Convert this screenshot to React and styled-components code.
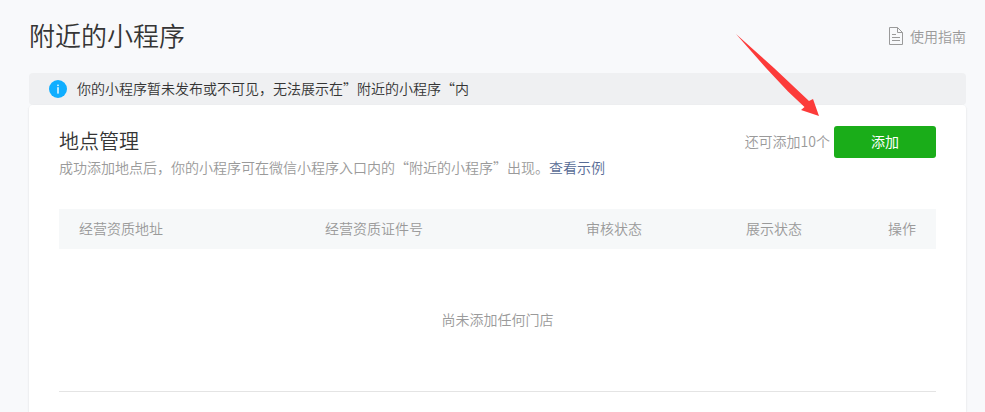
import React from 'react';
import styled, { createGlobalStyle } from 'styled-components';

const GlobalStyle = createGlobalStyle`
  * {
    box-sizing: border-box;
  }
  body {
    margin: 0;
    background: #f8f9fb;
    color: #353535;
    font-family: "Noto Sans CJK SC", "Liberation Sans", sans-serif;
    font-size: 14px;
    font-weight: 350;
    line-height: 20px;
  }
`;

const Page = styled.main`
  display: flex;
  flex-direction: column;
  min-height: 100vh;
  padding: 16px 19px 0 29px;
`;

const Header = styled.header`
  display: flex;
  align-items: center;
  justify-content: space-between;
  height: 40px;
  margin-bottom: 17px;
`;

const Title = styled.h1`
  margin: 0;
  font-size: 26px;
  font-weight: 350;
  line-height: 38px;
  padding-bottom: 2px;
`;

const Label = styled.span`
  padding-bottom: 2px;
`;

const GuideLink = styled.a`
  display: flex;
  align-items: center;
  gap: 7px;
  color: #9a9a9a;
  text-decoration: none;
`;

const Notice = styled.div`
  display: flex;
  align-items: center;
  gap: 10px;
  height: 32px;
  padding: 0 20px;
  border-radius: 4px;
  background: #eff0f2;
`;

const Card = styled.section`
  flex: 1;
  padding: 21px 30px 20px;
  border-radius: 4px 4px 0 0;
  background: #fff;
  box-shadow: 0 1px 2px rgba(150, 150, 150, 0.3);
`;

const CardHeader = styled.div`
  display: flex;
  align-items: flex-start;
  justify-content: space-between;
  margin-bottom: 31px;
`;

const SubTitle = styled.h2`
  margin: 0;
  font-size: 20px;
  font-weight: 350;
  line-height: 30px;
`;

const Desc = styled.p`
  margin: 0;
  color: #9a9a9a;
  line-height: 22px;
`;

const Link = styled.a`
  color: #576b95;
  text-decoration: none;
`;

const Actions = styled.div`
  position: relative;
  display: flex;
  align-items: center;
  gap: 4px;
  color: #9a9a9a;
`;

const Button = styled.button`
  width: 102px;
  height: 32px;
  padding: 0 0 2px;
  border: 0;
  border-radius: 3px;
  background: #1aad19;
  color: #fff;
  font: inherit;
  font-weight: 400;
  cursor: pointer;
`;

const Pointer = styled.svg`
  position: absolute;
  right: 116px;
  bottom: 42px;
  pointer-events: none;
`;

const Table = styled.table`
  width: 100%;
  table-layout: fixed;
  border-collapse: collapse;
  border-bottom: 1px solid #e4e4e4;
  color: #9a9a9a;
`;

const Th = styled.th`
  width: ${(props) => props.$width || 'auto'};
  height: 40px;
  padding: 0 20px 2px;
  background: #f6f8f9;
  font-weight: 350;
  text-align: ${(props) => props.$align || 'left'};
`;

const Empty = styled.td`
  padding: 60px 20px 62px;
  text-align: center;
`;

const InfoIcon = () => (
  <svg width="18" height="18" viewBox="0 0 18 18" aria-hidden="true">
    <circle cx="9" cy="9" r="9" fill="#10aeff" />
    <rect x="8.3" y="4.6" width="1.4" height="1.5" fill="#fff" />
    <rect x="8.3" y="7.2" width="1.4" height="6.4" fill="#fff" />
  </svg>
);

const DocIcon = () => (
  <svg width="14" height="18" viewBox="0 0 14 18" fill="none" stroke="#9a9a9a" aria-hidden="true">
    <path d="M0.5 0.5H8.5L13.5 5.5V17.5H0.5Z" />
    <path d="M8.5 0.5V5.5H13.5" />
    <path d="M3 7.5H7M3 10.5H11M3 13.5H11" />
  </svg>
);

const App = () => {
  return <>
    <GlobalStyle />
    <Page lang="zh-CN">
      <Header>
        <Title>附近的小程序</Title>
        <GuideLink href="#guide"><DocIcon />使用指南</GuideLink>
      </Header>

      <Notice>
        <InfoIcon />
        <Label>你的小程序暂未发布或不可见，无法展示在”附近的小程序“内</Label>
      </Notice>

      <Card>
        <CardHeader>
          <div>
            <SubTitle>地点管理</SubTitle>
            <Desc>
              成功添加地点后，你的小程序可在微信小程序入口内的“附近的小程序”出现。<Link href="#example">查看示例</Link>
            </Desc>
          </div>
          <Actions>
            <Label>还可添加10个</Label>
            <Button type="button">添加</Button>
            <Pointer width="84" height="82" viewBox="0 0 84 82" aria-hidden="true">
              <path d="M0 0L38 34L73 67L77 65L83 82L65 76L68.5 73L52 57.5L30 34Z" fill="#fc3b3a" />
            </Pointer>
          </Actions>
        </CardHeader>

        <Table>
          <thead>
            <tr>
              <Th $width="246px">经营资质地址</Th>
              <Th>经营资质证件号</Th>
              <Th $width="160px">审核状态</Th>
              <Th $width="120px">展示状态</Th>
              <Th $width="90px" $align="right">操作</Th>
            </tr>
          </thead>
          <tbody>
            <tr>
              <Empty colSpan={5}>尚未添加任何门店</Empty>
            </tr>
          </tbody>
        </Table>
      </Card>
    </Page>
  </>;
};

export default App;
